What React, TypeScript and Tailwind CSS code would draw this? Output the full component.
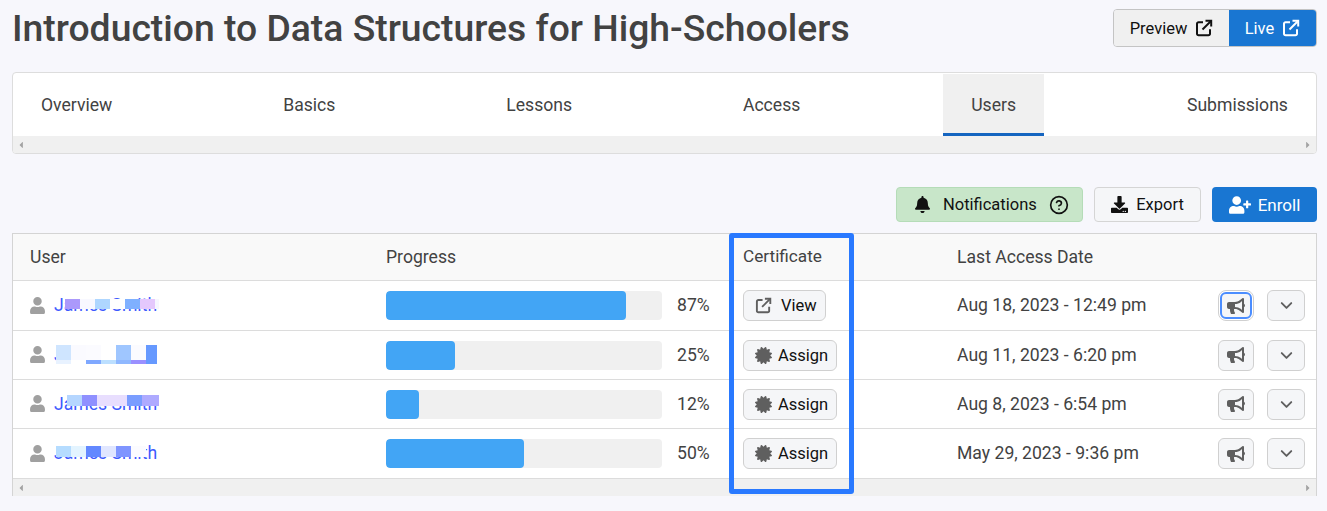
import type { ReactNode } from 'react';
import { ChevronDown, CircleHelp } from 'lucide-react';
import { FaBell, FaBullhorn, FaCaretLeft, FaCaretRight, FaCertificate, FaDownload, FaUser, FaUserPlus } from 'react-icons/fa';

type Block = { x: number; y: number; w: number; h: number; c: string };

const tabs = ['Overview', 'Basics', 'Lessons', 'Access', 'Users', 'Submissions'];

// blurred-out name patches, offsets from the left of the name
const rows: { name: string; pct: number; cert: string; date: string; blocks: Block[] }[] = [
  {
    name: 'James Smith',
    pct: 87,
    cert: 'View',
    date: 'Aug 18, 2023 - 12:49 pm',
    blocks: [
      { x: 11, y: 0, w: 15, h: 10, c: '#ab99fb' },
      { x: 26, y: 0, w: 15, h: 10, c: '#f8f8ff' },
      { x: 41, y: 0, w: 15, h: 10, c: '#aed6ff' },
      { x: 56, y: 0, w: 15, h: 10, c: '#ffffff' },
      { x: 71, y: 0, w: 15, h: 10, c: '#7fb0ff' },
      { x: 86, y: 0, w: 15, h: 10, c: '#e4c8fd' },
      { x: 101, y: 0, w: 4, h: 10, c: '#f6f6ff' },
    ],
  },
  {
    name: 'James Smith',
    pct: 25,
    cert: 'Assign',
    date: 'Aug 11, 2023 - 6:20 pm',
    blocks: [
      { x: 2, y: 0, w: 15, h: 15, c: '#cfe5ff' },
      { x: 17, y: 0, w: 15, h: 15, c: '#fafaff' },
      { x: 32, y: 0, w: 15, h: 15, c: '#fbfbff' },
      { x: 47, y: 0, w: 15, h: 15, c: '#ffffff' },
      { x: 62, y: 0, w: 15, h: 15, c: '#9fc6ff' },
      { x: 77, y: 0, w: 15, h: 15, c: '#fbfbff' },
      { x: 92, y: 0, w: 11, h: 19, c: '#6699ff' },
      { x: 2, y: 15, w: 15, h: 4, c: '#e8f2ff' },
      { x: 17, y: 15, w: 15, h: 4, c: '#ffffff' },
      { x: 32, y: 15, w: 15, h: 4, c: '#7fa8ff' },
      { x: 47, y: 15, w: 15, h: 4, c: '#bcdfff' },
      { x: 62, y: 15, w: 15, h: 4, c: '#8fb8ff' },
      { x: 77, y: 15, w: 15, h: 4, c: '#9a90ff' },
    ],
  },
  {
    name: 'James Smith',
    pct: 12,
    cert: 'Assign',
    date: 'Aug 8, 2023 - 6:54 pm',
    blocks: [
      { x: 13, y: 0, w: 15, h: 11, c: '#b5d6ff' },
      { x: 28, y: 0, w: 15, h: 11, c: '#8f90ff' },
      { x: 43, y: 0, w: 30, h: 11, c: '#e8defe' },
      { x: 73, y: 0, w: 15, h: 11, c: '#7a9dff' },
      { x: 88, y: 0, w: 17, h: 11, c: '#aeaaff' },
    ],
  },
  {
    name: 'James Smith',
    pct: 50,
    cert: 'Assign',
    date: 'May 29, 2023 - 9:36 pm',
    blocks: [
      { x: 2, y: 0, w: 15, h: 11, c: '#b5dcff' },
      { x: 17, y: 0, w: 15, h: 11, c: '#e3f4ff' },
      { x: 32, y: 0, w: 15, h: 11, c: '#6388ff' },
      { x: 47, y: 0, w: 15, h: 11, c: '#e0e6ff' },
      { x: 62, y: 0, w: 15, h: 11, c: '#7f95ff' },
      { x: 77, y: 0, w: 15, h: 11, c: '#fbfbff' },
    ],
  },
];

const blockTop = [-6, -10, -9, -7];
const rowHeights = ['h-[50px]', 'h-[49px]', 'h-[49px]', 'h-[50px]'];

function ExternalIcon({ size, className }: { size: number; className?: string }) {
  return (
    <svg width={size} height={size} viewBox="0 0 18 18" fill="none" stroke="currentColor" strokeWidth="2" className={className}>
      <path d="M8 3.2H3.5A1.5 1.5 0 0 0 2 4.7V14.7A1.5 1.5 0 0 0 3.5 16.2H13.5A1.5 1.5 0 0 0 15 14.7V10.2" />
      <path d="M7.5 10.5L16 2" />
      <path d="M10.5 1.8H16.2V7.5" />
    </svg>
  );
}

// button text sits a pixel below the icon's centre
function Label({ children }: { children: ReactNode }) {
  return <span className="pt-[2px]">{children}</span>;
}

function ScrollStrip() {
  return (
    <div className="flex h-[17px] items-center justify-between bg-[#f0f0f0] px-[3px] text-[#a3a3a3]">
      <FaCaretLeft size={10} />
      <FaCaretRight size={10} />
    </div>
  );
}

export default function App() {
  return (
    <div className="relative h-[511px] overflow-hidden bg-[#f7f7fc] pl-3 pr-[10px] pt-[9px] font-['Roboto',sans-serif] text-[17.6px] text-[#424242]">
      <div className="flex h-[38px] items-center justify-between">
        <h1 className="whitespace-nowrap pt-[2px] text-[37.3px] font-medium leading-none">
          Introduction to Data Structures for High-Schoolers
        </h1>
        <div className="flex h-[38px] overflow-hidden rounded border border-[#c4c4c4] text-[16.5px] text-[#111]">
          <button className="flex w-[115px] items-center justify-center gap-2 bg-[#f0f0f0]">
            <Label>Preview</Label> <ExternalIcon size={18} />
          </button>
          <button className="flex w-[87px] items-center justify-center gap-2 bg-[#1976d2] text-white">
            <Label>Live</Label> <ExternalIcon size={18} />
          </button>
        </div>
      </div>

      <div className="mt-[25px] overflow-hidden rounded border border-[#dddddd] bg-white">
        <div className="flex h-[63px] justify-between">
          {tabs.map((tab) => (
            <div
              key={tab}
              className={
                tab === 'Users'
                  ? 'mt-px flex items-center border-b-[3px] border-[#1565c0] bg-[#f0f0f0] px-7 pt-[4px]'
                  : 'flex items-center px-7 pt-[2px]'
              }
            >
              {tab}
            </div>
          ))}
        </div>
        <ScrollStrip />
      </div>

      <div className="mt-[33px] flex h-[35px] justify-end gap-[11px] text-[16.5px] text-[#111]">
        <button className="flex w-[187px] items-center gap-3 rounded border border-[#b5dcb8] bg-[#c8e6c9] pl-[17px]">
          <FaBell size={17} /> <Label>Notifications</Label> <CircleHelp size={20} />
        </button>
        <button className="flex w-[107px] items-center justify-center gap-2 rounded border border-[#d5d5d5] bg-[#f5f6f8]">
          <FaDownload size={17} /> <Label>Export</Label>
        </button>
        <button className="flex w-[105px] items-center justify-center gap-[7px] rounded bg-[#1976d2] text-[17px] text-white">
          <FaUserPlus size={22} /> <Label>Enroll</Label>
        </button>
      </div>

      <div className="mt-[11px] border border-b-0 border-[#d4d4d4] bg-white">
        <div className="grid h-[47px] grid-cols-[373px_357px_214px_1fr] items-center border-b border-[#dcdcdc] bg-[#f9f9f9]">
          <div className="pl-[17px]">User</div>
          <div>Progress</div>
          <div className="text-[17.2px]">Certificate</div>
          <div>Last Access Date</div>
        </div>
        {rows.map((row, i) => (
          <div
            key={i}
            className={`grid grid-cols-[373px_357px_214px_1fr] items-center border-b border-[#dcdcdc] ${rowHeights[i]}`}
          >
            <div className="flex items-center gap-2 pl-[16px]">
              <FaUser size={17} className="text-[#a0a0a0]" />
              <span className="relative text-[#3d5afe]">
                <span className="inline-block w-[104px] whitespace-nowrap">{row.name}</span>
                <span className="absolute left-0 top-1/2">
                  {row.blocks.map((b, j) => (
                    <span
                      key={j}
                      className="absolute"
                      style={{ left: b.x, top: b.y + blockTop[i], width: b.w, height: b.h, background: b.c }}
                    />
                  ))}
                </span>
              </span>
            </div>

            <div className="flex items-center">
              <div className="h-[29px] w-[276px] overflow-hidden rounded bg-[#f0f0f0]">
                <div className="h-full rounded bg-[#42a5f5]" style={{ width: `${row.pct}%` }} />
              </div>
              <div className="ml-[15px]">{row.pct}%</div>
            </div>

            <div>
              <button
                className={`flex h-[31px] items-center rounded-md border border-[#d0d0d0] bg-[#f5f6f8] pl-[11px] pr-[8px] text-[16.5px] text-[#111] ${
                  row.cert === 'View' ? 'gap-[9px]' : 'gap-[6px]'
                }`}
              >
                {row.cert === 'View' ? (
                  <ExternalIcon size={17} className="text-[#5f5f5f]" />
                ) : (
                  <FaCertificate size={17} className="text-[#5f5f5f]" />
                )}
                <Label>{row.cert}</Label>
              </button>
            </div>

            <div className="flex items-center justify-between pr-[11px]">
              <span>{row.date}</span>
              <div className="flex items-center gap-[13px]">
                <button
                  className={`flex items-center justify-center rounded-md bg-[#f5f6f8] text-[#5f5f5f] ${
                    i === 0
                      ? 'mx-[2px] h-[27px] w-[32px] rounded-[4px] border-2 border-[#4b8dff] outline outline-1 outline-offset-1 outline-[#d0d0d0]'
                      : 'h-[31px] w-9 border border-[#d0d0d0]'
                  }`}
                >
                  <FaBullhorn size={18} />
                </button>
                <button className="flex h-[31px] w-[38px] items-center justify-center rounded-md border border-[#d0d0d0] bg-[#f5f6f8] text-[#5f5f5f]">
                  <ChevronDown size={19} strokeWidth={2.4} />
                </button>
              </div>
            </div>
          </div>
        ))}
        <ScrollStrip />
      </div>

      {/* annotation box drawn on top of the certificate column */}
      <div className="absolute left-[729px] top-[233px] h-[261px] w-[125px] rounded-[3px] border-[5px] border-[#2979ff]" />
    </div>
  );
}
